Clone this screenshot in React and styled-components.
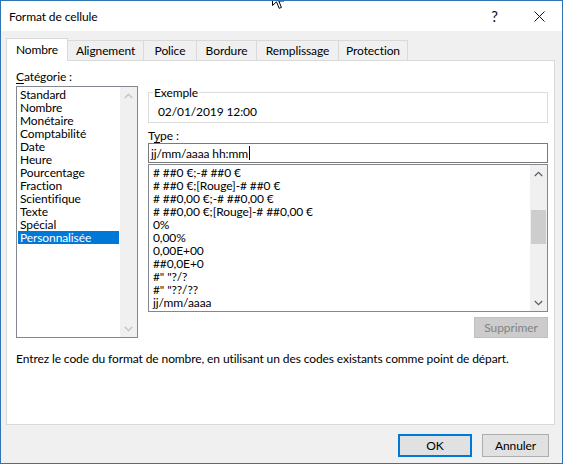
import React from 'react';
import styled, { createGlobalStyle } from 'styled-components';

const Global = createGlobalStyle`
  html, body { margin: 0; padding: 0; background: #ffffff; }
  body {
    font-family: Lato, "Liberation Sans", sans-serif;
    font-size: 12px;
    letter-spacing: -0.1px;
    color: #000;
  }
  * { box-sizing: border-box; }
`;

const Window = styled.div`
  position: relative;
  width: 563px;
  height: 464px;
  border: 1px solid #2f74b5;
  background: #f0f0f0;
  display: flex;
  flex-direction: column;
  overflow: hidden;
`;

const TitleBar = styled.div`
  height: 30px;
  flex: none;
  background: #ffffff;
  display: flex;
  align-items: center;
  padding-left: 8px;
`;

const Title = styled.div`
  flex: 1;
  line-height: 15px;
`;

const CtrlButton = styled.div`
  width: 45px;
  height: 30px;
  display: flex;
  align-items: center;
  justify-content: center;
  font-size: 15px;
  color: #111;
`;

const Body = styled.div`
  flex: 1;
  display: flex;
  flex-direction: column;
  padding: 7px 7px 0 5px;
`;

const TabRow = styled.div`
  display: flex;
  align-items: flex-end;
  height: 23px;
  margin-bottom: -1px;
  position: relative;
  z-index: 1;
`;

const Tab = styled.div`
  width: ${p => p.$w}px;
  height: ${p => (p.$active ? 23 : 20)}px;
  margin-bottom: ${p => (p.$active ? 0 : 1)}px;
  margin-left: ${p => (p.$first ? 0 : -1)}px;
  border: 1px solid #d9d9d9;
  border-bottom: none;
  background: ${p => (p.$active ? '#ffffff' : '#f0f0f0')};
  position: relative;
  z-index: ${p => (p.$active ? 2 : 1)};
  display: flex;
  align-items: center;
  justify-content: center;
  padding-bottom: ${p => (p.$active ? 2 : 0)}px;
  line-height: 15px;
`;

const Panel = styled.div`
  height: 365px;
  flex: none;
  border: 1px solid #d9d9d9;
  background: #ffffff;
  padding: 8px 6px 0 9px;
  display: flex;
  flex-direction: column;
`;

const Columns = styled.div`
  display: grid;
  grid-template-columns: 122px 400px;
  column-gap: 10px;
`;

const Column = styled.div`
  display: flex;
  flex-direction: column;
  padding-top: ${p => p.$top || 0}px;
`;

const Label = styled.div`
  line-height: 15px;
  margin-top: ${p => p.$mt || 0}px;
  margin-bottom: ${p => p.$mb || 0}px;
`;

const U = styled.span`
  text-decoration: underline;
  text-underline-offset: 2px;
`;

const ListBox = styled.div`
  height: ${p => p.$h}px;
  margin-top: ${p => p.$mt || 0}px;
  border: 1px solid #828790;
  background: #ffffff;
  display: flex;
`;

const Items = styled.div`
  flex: 1;
  padding: 1px;
  overflow: hidden;
`;

const Item = styled.div`
  height: 13px;
  line-height: 13px;
  padding-left: ${p => p.$pl}px;
  white-space: nowrap;
  background: ${p => (p.$selected ? '#0078d7' : 'transparent')};
  color: ${p => (p.$selected ? '#ffffff' : '#000000')};
`;

const ScrollBar = styled.div`
  width: 17px;
  flex: none;
  background: #f0f0f0;
  display: flex;
  flex-direction: column;
`;

const ScrollArrow = styled.div`
  height: 17px;
  flex: none;
  display: flex;
  align-items: center;
  justify-content: center;
`;

const Track = styled.div`
  flex: 1;
  display: flex;
  flex-direction: column;
  align-items: center;
`;

const Thumb = styled.div`
  width: 15px;
  background: #cdcdcd;
`;

const GroupBox = styled.fieldset`
  margin: 0;
  padding: 0;
  min-width: 0;
  height: 38px;
  border: 1px solid #dcdcdc;
`;

const Legend = styled.legend`
  margin-left: 4px;
  padding: 0 1px;
  line-height: 15px;
`;

const ExampleValue = styled.div`
  padding: 4px 0 0 9px;
  line-height: 15px;
`;

const TextInput = styled.div`
  height: 20px;
  border: 1px solid #7a7a7a;
  background: #ffffff;
  display: flex;
  align-items: center;
  padding-left: 2px;
  line-height: 15px;
`;

const Caret = styled.span`
  display: inline-block;
  width: 1px;
  height: 14px;
  background: #000;
  margin-left: 1px;
`;

const ButtonRow = styled.div`
  display: flex;
  justify-content: flex-end;
  gap: 10px;
  margin-top: ${p => p.$mt || 0}px;
  padding-right: ${p => p.$pr || 0}px;
`;

const Button = styled.div`
  width: ${p => p.$w}px;
  height: ${p => p.$h || 23}px;
  display: flex;
  align-items: center;
  justify-content: center;
  line-height: 15px;
  background: ${p => (p.$disabled ? '#cccccc' : '#e1e1e1')};
  color: ${p => (p.$disabled ? '#838383' : '#000000')};
  border: ${p => (p.$default ? '2px solid #0078d7' : p.$disabled ? '1px solid #bfbfbf' : '1px solid #adadad')};
`;

const HelpText = styled.div`
  margin-top: 13px;
  line-height: 15px;
`;

const Footer = styled.div`
  padding-top: 9px;
`;

const Cursor = styled.svg`
  position: absolute;
  left: 271px;
  top: -12px;
`;

const Chevron = ({ up, color }) => (
  <svg width="9" height="6" viewBox="0 0 9 6">
    <path
      d={up ? 'M0.8 5 L4.5 1.3 L8.2 5' : 'M0.8 1 L4.5 4.7 L8.2 1'}
      fill="none"
      stroke={color}
      strokeWidth="1.3"
    />
  </svg>
);

const categories = [
  'Standard', 'Nombre', 'Monétaire', 'Comptabilité', 'Date', 'Heure',
  'Pourcentage', 'Fraction', 'Scientifique', 'Texte', 'Spécial', 'Personnalisée',
];

const formats = [
  '# ##0 €;-# ##0 €',
  '# ##0 €;[Rouge]-# ##0 €',
  '# ##0,00 €;-# ##0,00 €',
  '# ##0,00 €;[Rouge]-# ##0,00 €',
  '0%',
  '0,00%',
  '0,00E+00',
  '##0,0E+0',
  '#" "?/?',
  '#" "??/??',
  'jj/mm/aaaa',
];

const tabs = [
  { label: 'Nombre', w: 62 },
  { label: 'Alignement', w: 77 },
  { label: 'Police', w: 54 },
  { label: 'Bordure', w: 61 },
  { label: 'Remplissage', w: 83 },
  { label: 'Protection', w: 70 },
];

export default function App() {
  return (
    <>
      <Global />
      <Window>
        <TitleBar>
          <Title>Format de cellule</Title>
          <CtrlButton>?</CtrlButton>
          <CtrlButton>
            <svg width="11" height="11" viewBox="0 0 11 11">
              <path d="M0.5 0.5 L10.5 10.5 M10.5 0.5 L0.5 10.5" stroke="#111" strokeWidth="1" />
            </svg>
          </CtrlButton>
        </TitleBar>
        <Body>
          <TabRow>
            {tabs.map((t, i) => (
              <Tab key={t.label} $w={t.w} $first={i === 0} $active={i === 0}>
                {t.label}
              </Tab>
            ))}
          </TabRow>
          <Panel>
            <Columns>
              <Column>
                <Label $mb={2}>
                  <U>C</U>atégorie :
                </Label>
                <ListBox $h={252}>
                  <Items>
                    {categories.map(c => (
                      <Item key={c} $pl={2} $selected={c === 'Personnalisée'}>
                        {c}
                      </Item>
                    ))}
                  </Items>
                  <ScrollBar>
                    <ScrollArrow>
                      <Chevron up color="#c2c2c2" />
                    </ScrollArrow>
                    <Track />
                    <ScrollArrow>
                      <Chevron color="#c2c2c2" />
                    </ScrollArrow>
                  </ScrollBar>
                </ListBox>
              </Column>
              <Column $top={16}>
                <GroupBox>
                  <Legend>Exemple</Legend>
                  <ExampleValue>02/01/2019 12:00</ExampleValue>
                </GroupBox>
                <Label $mt={5}>
                  T<U>y</U>pe :
                </Label>
                <TextInput>
                  jj/mm/aaaa hh:mm
                  <Caret />
                </TextInput>
                <ListBox $h={148} $mt={1}>
                  <Items>
                    {formats.map(f => (
                      <Item key={f} $pl={3}>
                        {f}
                      </Item>
                    ))}
                  </Items>
                  <ScrollBar>
                    <ScrollArrow>
                      <Chevron up color="#606060" />
                    </ScrollArrow>
                    <Track>
                      <Thumb style={{ marginTop: 28, height: 34 }} />
                    </Track>
                    <ScrollArrow>
                      <Chevron color="#606060" />
                    </ScrollArrow>
                  </ScrollBar>
                </ListBox>
                <ButtonRow $mt={5}>
                  <Button $w={74} $h={21} $disabled>
                    Supprimer
                  </Button>
                </ButtonRow>
              </Column>
            </Columns>
            <HelpText>
              Entrez le code du format de nombre, en utilisant un des codes existants comme point de départ.
            </HelpText>
          </Panel>
          <Footer>
            <ButtonRow $pr={6}>
              <Button $w={74} $default>
                OK
              </Button>
              <Button $w={67}>Annuler</Button>
            </ButtonRow>
          </Footer>
        </Body>
        <Cursor width="13" height="21" viewBox="0 0 13 21">
          <path
            d="M0.5 0.5 L0.5 16.5 L4.5 12.8 L7.2 19.3 L9.4 18.4 L6.8 12 L12 12 Z"
            fill="#ffffff"
            stroke="#000000"
            strokeWidth="1"
          />
        </Cursor>
      </Window>
    </>
  );
}
